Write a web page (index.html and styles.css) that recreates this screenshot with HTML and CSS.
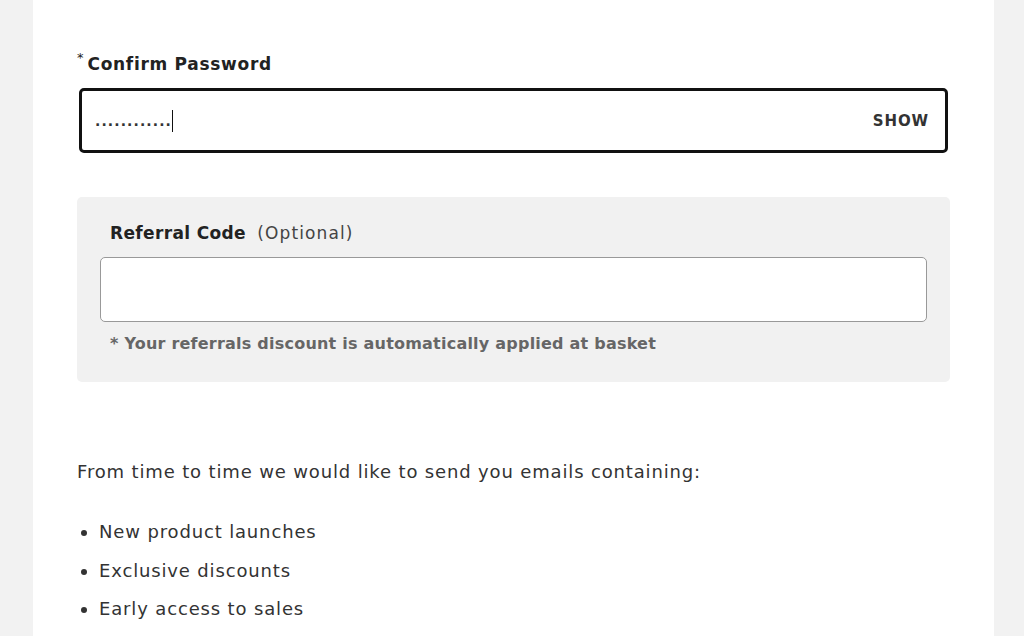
FILE: index.html
```html
<!DOCTYPE html>
<html lang="en">
<head>
<meta charset="utf-8">
<title>Register</title>
<link rel="stylesheet" href="styles.css">
</head>
<body>
<main class="panel">
  <div class="field">
    <label class="label"><span class="req">*</span>Confirm Password</label>
    <div class="pw-input">
      <span class="pw-value">............</span><span class="caret"></span>
      <span class="show">SHOW</span>
    </div>
  </div>

  <section class="referral">
    <div class="ref-label"><strong>Referral Code</strong> <span class="optional">(Optional)</span></div>
    <div class="ref-input"></div>
    <p class="ref-note">* Your referrals discount is automatically applied at basket</p>
  </section>

  <p class="intro">From time to time we would like to send you emails containing:</p>
  <ul class="benefits">
    <li>New product launches</li>
    <li>Exclusive discounts</li>
    <li>Early access to sales</li>
  </ul>
</main>
</body>
</html>
```
FILE: styles.css
```css
html, body {
  margin: 0;
  padding: 0;
}
body {
  background: #f2f2f2;
  font-family: "DejaVu Sans", "Open Sans", sans-serif;
  color: #333;
  overflow: hidden;
}
.panel {
  background: #fff;
  margin: 0 30px 0 33px;
  height: 636px;
  padding: 52px 44px 0 44px;
  box-sizing: border-box;
}
.field {
  width: 871px;
}
.label {
  display: block;
  font-size: 17px;
  font-weight: bold;
  letter-spacing: 0.7px;
  color: #222;
  line-height: 24px;
  margin-bottom: 12px;
}
.req {
  font-size: 13px;
  vertical-align: top;
  line-height: 12px;
  margin-right: 4px;
  font-weight: normal;
  letter-spacing: 0;
}
.pw-input {
  margin-left: 2px;
  height: 65px;
  box-sizing: border-box;
  border: 3px solid #111;
  border-radius: 5px;
  display: flex;
  align-items: center;
  padding: 0 16px 0 13px;
}
.pw-value {
  font-size: 14px;
  letter-spacing: 1.1px;
  color: #333;
  font-weight: bold;
}
.caret {
  display: inline-block;
  width: 1px;
  height: 22px;
  background: #111;
}
.show {
  margin-left: auto;
  font-size: 15px;
  font-weight: bold;
  letter-spacing: 0.9px;
  color: #333;
}
.referral {
  margin-top: 44px;
  width: 873px;
  box-sizing: border-box;
  background: #f1f1f1;
  border-radius: 5px;
  padding: 24px 23px 26px 23px;
}
.ref-label {
  font-size: 17px;
  line-height: 24px;
  color: #333;
  padding-left: 10px;
  margin-bottom: 12px;
}
.ref-label strong {
  color: #222;
  letter-spacing: 0.35px;
  margin-right: 6px;
}
.optional {
  color: #444;
  letter-spacing: 1.1px;
}
.ref-input {
  height: 65px;
  box-sizing: border-box;
  background: #fff;
  border: 1.5px solid #999;
  border-radius: 5px;
}
.ref-note {
  margin: 10px 0 0 10px;
  font-size: 16px;
  line-height: 24px;
  font-weight: bold;
  letter-spacing: 0.22px;
  color: #666;
}
.intro {
  margin: 78px 0 0 0;
  font-size: 18px;
  line-height: 24px;
  letter-spacing: 0.85px;
  color: #333;
}
.benefits {
  margin: 36px 0 0 0;
  padding-left: 22px;
  font-size: 18px;
  line-height: 24px;
  letter-spacing: 0.85px;
  color: #333;
}
.benefits li {
  margin-bottom: 14.5px;
}
```
